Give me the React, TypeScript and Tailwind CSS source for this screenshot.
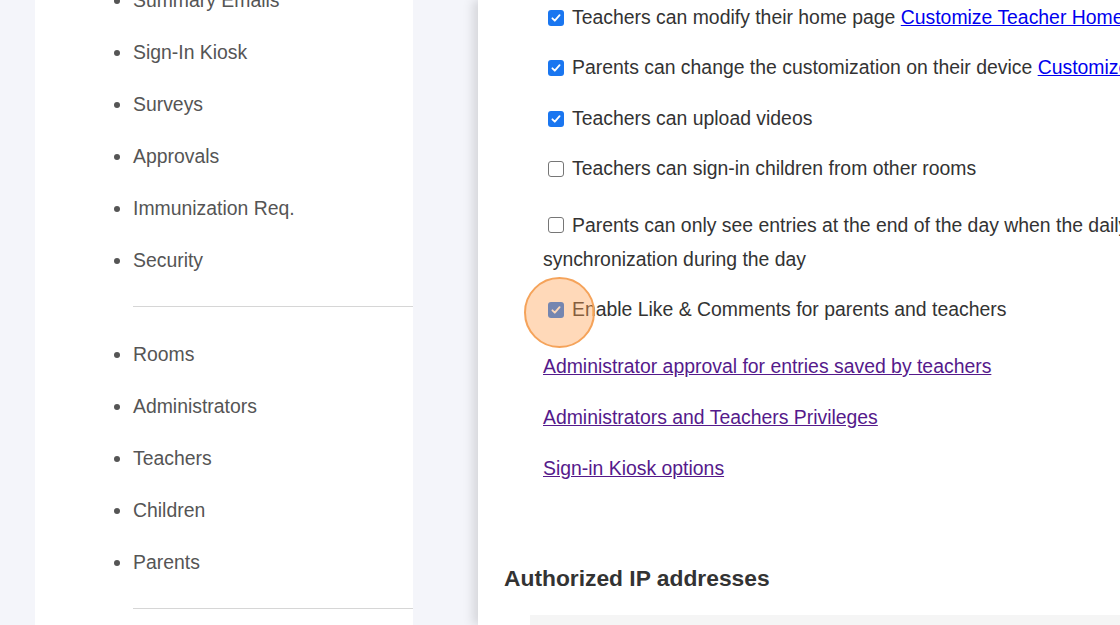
import React from "react";

const sideTop = [
  "Summary Emails",
  "Sign-In Kiosk",
  "Surveys",
  "Approvals",
  "Immunization Req.",
  "Security",
];
const sideBottom = ["Rooms", "Administrators", "Teachers", "Children", "Parents"];

function Box({ checked }: { checked: boolean }) {
  if (!checked) {
    return (
      <span className="inline-block h-[16px] w-[16px] shrink-0 rounded-[3px] border border-[#767676] bg-white align-[-2px]" />
    );
  }
  return (
    <span className="inline-flex h-[16px] w-[16px] shrink-0 items-center justify-center rounded-[3px] bg-[#1a76f0] align-[-2px]">
      <svg viewBox="0 0 16 16" className="h-[12px] w-[12px]">
        <path
          d="M3.2 8.4 L6.4 11.6 L12.8 4.2"
          fill="none"
          stroke="#fff"
          strokeWidth="2.4"
          strokeLinecap="round"
          strokeLinejoin="round"
        />
      </svg>
    </span>
  );
}

function Row({
  checked,
  children,
  className = "",
}: {
  checked: boolean;
  children: React.ReactNode;
  className?: string;
}) {
  return (
    <div className={`flex h-[34px] items-center whitespace-nowrap ${className}`}>
      <span className="ml-[5px] mr-[8px] flex">
        <Box checked={checked} />
      </span>
      {children}
    </div>
  );
}

export default function App() {
  return (
    <div
      className="flex h-[625px] w-[1120px] overflow-hidden bg-[#f4f5fa]"
      style={{ fontFamily: '"Liberation Sans", Arial, sans-serif' }}
    >
      {/* Left settings menu */}
      <div className="ml-[35px] w-[378px] shrink-0 bg-white text-[19.4px] text-[#555]">
        <ul className="-mt-[26px] list-disc pl-[98px]">
          {sideTop.map((t) => (
            <li key={t} className="h-[52px] leading-[52px]">
              {t}
            </li>
          ))}
        </ul>
        <div className="ml-[98px] mt-[20px] h-px bg-[#d6d6d6]" />
        <ul className="mt-[21px] list-disc pl-[98px]">
          {sideBottom.map((t) => (
            <li key={t} className="h-[52px] leading-[52px]">
              {t}
            </li>
          ))}
        </ul>
        <div className="ml-[98px] mt-[20px] h-px bg-[#d6d6d6]" />
      </div>

      {/* Right settings content */}
      <div className="relative ml-[65px] flex-1 overflow-hidden bg-white pl-[26px] text-[19.4px] text-[#333] shadow-[-5px_0_10px_rgba(0,0,0,0.13)]">
        <div className="pl-[39px] pt-[1px]">
          <Row checked>
            Teachers can modify their home page&nbsp;
            <a className="text-[#0000ee] underline">Customize Teacher Home page</a>
          </Row>
          <Row checked className="mt-[16px]">
            Parents can change the customization on their device&nbsp;
            <a className="text-[#0000ee] underline">Customize Parent app</a>
          </Row>
          <Row checked className="mt-[17px]">
            Teachers can upload videos
          </Row>
          <Row checked={false} className="mt-[16px]">
            Teachers can sign-in children from other rooms
          </Row>
          <div className="mt-[22px] leading-[34px]">
            <div className="flex h-[34px] items-center whitespace-nowrap">
              <span className="ml-[5px] mr-[8px] flex">
                <Box checked={false} />
              </span>
              Parents can only see entries at the end of the day when the daily report is sent, no
            </div>
            <div className="h-[34px] whitespace-nowrap">synchronization during the day</div>
          </div>
          <Row checked className="mt-[17px]">
            Enable Like &amp; Comments for parents and teachers
          </Row>
          <div className="mt-[22px] h-[34px] leading-[34px]">
            <a className="text-[#551a8b] underline">Administrator approval for entries saved by teachers</a>
          </div>
          <div className="mt-[17px] h-[34px] leading-[34px]">
            <a className="text-[#551a8b] underline">Administrators and Teachers Privileges</a>
          </div>
          <div className="mt-[17px] h-[34px] leading-[34px]">
            <a className="text-[#551a8b] underline">Sign-in Kiosk options</a>
          </div>
        </div>
        <h2 className="mt-[78px] h-[30px] text-[22.8px] font-bold leading-[30px] text-[#333]">
          Authorized IP addresses
        </h2>
        <div className="ml-[26px] mt-[22px] h-[60px] bg-[#f5f5f5]" />

        {/* click highlight */}
        <div className="pointer-events-none absolute left-[46px] top-[277px] h-[71px] w-[71px] rounded-full border-2 border-[#f5a35a] bg-[rgba(255,160,80,0.4)]" />
      </div>
    </div>
  );
}
